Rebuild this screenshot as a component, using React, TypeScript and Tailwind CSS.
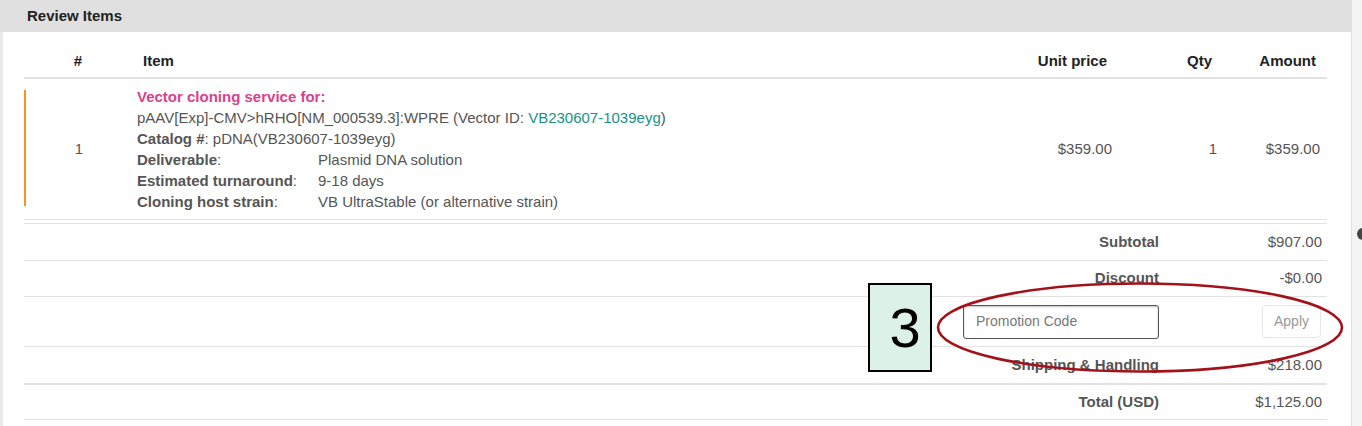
import React from "react";

const font = { fontFamily: '"Liberation Sans", Arial, sans-serif' };

function Detail({ label, value }: { label: string; value: React.ReactNode }) {
  return (
    <div className="flex">
      <div className="w-[181px] shrink-0">
        <span className="font-bold">{label}</span>:
      </div>
      <div>{value}</div>
    </div>
  );
}

function SumRow({
  label,
  value,
  h,
  thick,
}: {
  label: string;
  value: string;
  h: string;
  thick?: boolean;
}) {
  return (
    <div
      className={`flex items-center ${h} ${thick ? "border-t-2" : "border-t"} border-[#e2e2e2]`}
    >
      <div className="flex-1 text-right font-bold text-[#555]">{label}</div>
      <div className="w-[168px] text-right text-[#555] pr-[5px]">{value}</div>
    </div>
  );
}

export default function App() {
  return (
    <div
      className="relative w-[1362px] h-[426px] overflow-hidden bg-[#f3f3f3] flex text-[15px] text-[#555]"
      style={font}
    >
      <div className="w-[1352px] h-full flex flex-col bg-white">
        <div className="h-[32px] shrink-0 bg-[#e0e0e0] flex items-center pl-[27px] font-bold text-[#222]">
          Review Items
        </div>
        <div className="flex-1 border-l-[3px] border-l-[#e9e9e9] border-r border-r-[#dedede] pt-[10px]">
          <div className="ml-[21px] w-[1303px]">
            {/* header row */}
            <div className="flex items-center h-[37px] pt-[3px] border-b-2 border-[#e2e2e2] font-bold text-[#222]">
              <div className="w-[108px] text-center">#</div>
              <div className="flex-1 pl-[11px]">Item</div>
              <div className="w-[120px] text-right pr-[8px]">Unit price</div>
              <div className="w-[105px] text-right pr-[8px]">Qty</div>
              <div className="w-[107px] text-right pr-[11px]">Amount</div>
            </div>
            {/* item row */}
            <div className="flex items-center border-b border-[#e2e2e2] h-[141px]">
              <div className="w-[2px] self-stretch mt-[11px] mb-[13px] bg-[#f7941d]" />
              <div className="w-[106px] text-center">1</div>
              <div className="flex-1 pl-[5px] leading-[21px]">
                <div className="font-bold text-[#d9418d]">Vector cloning service for:</div>
                <div>
                  pAAV[Exp]-CMV&gt;hRHO[NM_000539.3]:WPRE (Vector ID:{" "}
                  <span className="text-[#17928a]">VB230607-1039eyg</span>)
                </div>
                <div>
                  <span className="font-bold">Catalog #</span>: pDNA(VB230607-1039eyg)
                </div>
                <Detail label="Deliverable" value="Plasmid DNA solution" />
                <Detail label="Estimated turnaround" value="9-18 days" />
                <Detail label="Cloning host strain" value="VB UltraStable (or alternative strain)" />
              </div>
              <div className="w-[120px] text-right pr-[3px]">$359.00</div>
              <div className="w-[105px] text-right pr-[3px]">1</div>
              <div className="w-[107px] text-right pr-[7px]">$359.00</div>
            </div>
            {/* summary */}
            <div className="mt-[3px] border-b border-[#e2e2e2]">
              <SumRow label="Subtotal" value="$907.00" h="h-[37px]" />
              <SumRow label="Discount" value="-$0.00" h="h-[36px]" />
              <div className="flex items-center h-[50px] border-t border-[#e2e2e2]">
                <div className="flex-1 flex justify-end">
                  <div className="w-[196px] h-[34px] rounded-[3px] border border-[#555] shadow-[inset_0_1px_2px_rgba(0,0,0,0.25)] flex items-center pl-[12px] text-[14px] text-[#777]">
                    Promotion Code
                  </div>
                </div>
                <div className="w-[168px] flex justify-end pr-[6px]">
                  <div className="w-[59px] h-[33px] rounded-[4px] border border-[#e6e6e6] flex items-center justify-center text-[14px] text-[#999]">
                    Apply
                  </div>
                </div>
              </div>
              <SumRow label="Shipping & Handling" value="$218.00" h="h-[37px]" />
              <SumRow label="Total (USD)" value="$1,125.00" h="h-[36px]" thick />
            </div>
          </div>
        </div>
      </div>
      <div className="flex-1 h-full overflow-hidden pt-[228px] pl-[5px]">
        <div className="w-[12px] h-[12px] rounded-full bg-[#444]" />
      </div>

      {/* annotation overlays */}
      <div className="absolute left-[868px] top-[283px] w-[64px] h-[89px] border-2 border-black bg-[#dcf2e8] flex items-center justify-center pl-[10px] text-[56px] leading-none text-black">
        3
      </div>
      <svg
        className="absolute left-[930px] top-[278px]"
        width="420"
        height="100"
        viewBox="0 0 420 100"
      >
        <ellipse cx="210" cy="49.5" rx="202" ry="44" fill="none" stroke="#a3121a" strokeWidth="2.6" />
      </svg>
    </div>
  );
}
